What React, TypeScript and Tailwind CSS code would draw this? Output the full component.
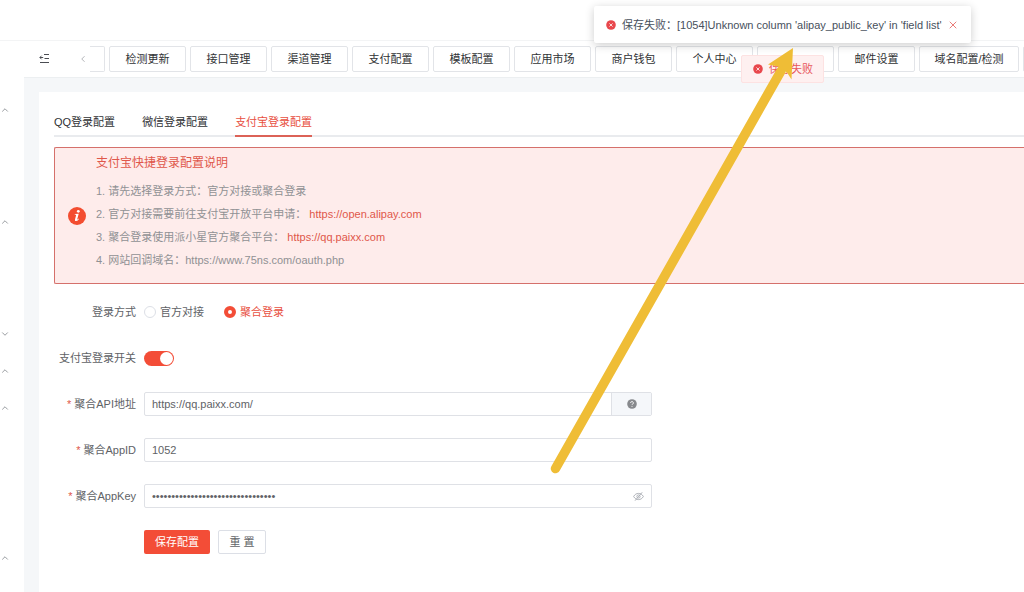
import React, { useState } from 'react';
import { ChevronDown, ChevronLeft, ChevronUp, X } from 'lucide-react';

const menuGroups = [
  { name: '菜单一', open: true, size: 'h-28' },
  { name: '菜单二', open: true, size: 'h-28' },
  { name: '菜单三', open: false, size: 'h-[37px]' },
  { name: '菜单四', open: true, size: 'h-[37px]' },
  { name: '菜单五', open: true, size: 'h-[150px]' },
  { name: '菜单六', open: true, size: 'h-[37px]' },
];

const pageTabs = [
  '检测更新',
  '接口管理',
  '渠道管理',
  '支付配置',
  '模板配置',
  '应用市场',
  '商户钱包',
  '个人中心',
  '',
  '邮件设置',
];

const loginTabs = ['QQ登录配置', '微信登录配置', '支付宝登录配置'];

function ErrorIcon() {
  return (
    <svg className="size-[10px] shrink-0" viewBox="0 0 10 10" aria-hidden="true">
      <circle cx="5" cy="5" r="4.8" fill="#e8474c" />
      <path d="M3.7 3.7l2.6 2.6M6.3 3.7l-2.6 2.6" stroke="#fff" strokeWidth="0.8" strokeLinecap="round" />
    </svg>
  );
}

function FoldIcon() {
  return (
    <svg className="h-[10px] w-[11px]" viewBox="0 0 11 10" fill="none" stroke="#4a4d52" aria-hidden="true">
      <path d="M5 0.5H10M5.5 4.5H10M1 8.5H10M1 3.5h3.200" strokeWidth="1" />
      <path d="M2.6 1.700L0.800 3.500L2.600 5.300" strokeWidth="0.9" />
    </svg>
  );
}

function Row({ label, required, htmlFor, children }: { label?: string; required?: boolean; htmlFor?: string; children: React.ReactNode }) {
  return (
    <div className="flex h-6 items-center gap-2">
      <label htmlFor={htmlFor} className="w-[82px] shrink-0 text-right whitespace-nowrap text-[#606266]">
        {required && <span className="mr-[3px] text-[#e0574a]">*</span>}
        {label}
      </label>
      {children}
    </div>
  );
}

function Radio({ text, checked, onChange }: { text: string; checked: boolean; onChange: () => void }) {
  return (
    <label className={checked ? 'flex items-center gap-1 text-[#e8503f]' : 'flex items-center gap-1 text-[#606266]'}>
      <input
        type="radio"
        name="mode"
        checked={checked}
        onChange={onChange}
        className="size-3 appearance-none rounded-full border border-[#dcdfe6] bg-white checked:border-4 checked:border-[#f34d37]"
      />
      {text}
    </label>
  );
}

export default function App() {
  const [mode, setMode] = useState('union');
  const [enabled, setEnabled] = useState(true);
  return (
    <div className="relative flex h-screen flex-col overflow-hidden bg-white font-['Liberation_Sans','Noto_Sans_CJK_SC',sans-serif] text-[11px] leading-4">
      <header className="h-10 shrink-0" />
      <div className="flex min-h-0 flex-1">
        <nav className="w-6 shrink-0 border-t border-[#f3f4f5] pt-[50px]">
          {menuGroups.map((g) => (
            <div key={g.name} className={g.size}>
              <button aria-label={g.name} className="flex h-[37px] w-full items-center text-[#86898e]">
                {g.open ? <ChevronUp className="size-[10px]" strokeWidth={2} /> : <ChevronDown className="size-[10px]" strokeWidth={2} />}
              </button>
            </div>
          ))}
        </nav>
        <main className="flex min-w-0 flex-1 flex-col bg-[#f5f7f9]">
          <div className="flex h-[38px] shrink-0 items-center border-t border-b border-t-[#f3f4f5] border-b-[#eceff1] bg-white">
            <button aria-label="折叠菜单" className="ml-[15px]">
              <FoldIcon />
            </button>
            <button aria-label="向左" className="ml-7 text-[#a3a6ab]">
              <ChevronLeft className="size-[10px]" strokeWidth={2} />
            </button>
            <div className="ml-[2px] flex min-w-0 flex-1 gap-1 overflow-hidden">
              <button aria-label="首页" className="h-[26px] w-[15px] shrink-0 rounded-r-xs border border-l-0 border-[#e2e4e8]" />
              {pageTabs.map((t) => (
                <button key={t} className="h-[26px] w-[77px] shrink-0 rounded-xs border border-[#e2e4e8] whitespace-nowrap text-[#303235]">
                  {t}
                </button>
              ))}
              <button className="h-[26px] w-[100px] shrink-0 rounded-xs border border-[#e2e4e8] whitespace-nowrap text-[#303235]">
                域名配置/检测
              </button>
              <button aria-label="更多" className="h-[26px] w-[77px] shrink-0 rounded-xs border border-[#e2e4e8]" />
            </div>
          </div>

          <section className="mt-[14px] ml-[15px] flex-1 bg-white pt-[18px] pl-[15px]">
            <div role="tablist" className="flex h-[27px] gap-[27px] border-b-2 border-[#e9ebee]">
              {loginTabs.map((t, i) => (
                <button
                  key={t}
                  role="tab"
                  aria-selected={i === 2}
                  className={
                    i === 2
                      ? 'h-[27px] border-b-2 border-[#dc6257] pb-px whitespace-nowrap text-[#e8503f]'
                      : 'h-[27px] border-b-2 border-transparent pb-px whitespace-nowrap text-[#303235]'
                  }
                >
                  {t}
                </button>
              ))}
            </div>

            <div className="mt-[10px] flex h-[137px] items-center gap-[10px] rounded-l-xs border border-r-0 border-[#d5706b] bg-[#feeceb] pl-[13px]">
              <svg className="size-[18px] shrink-0" viewBox="0 0 18 18" aria-hidden="true">
                <circle cx="9" cy="9" r="9" fill="#f34d30" />
                <circle cx="10.3" cy="4.300" r="1.4" fill="#fff" />
                <path d="M6.700 7.100L10.700 6.700L9.200 12.200Q9.200 12.800 10.700 11.500L11 11.900Q9.300 14.200 7.700 14.100Q6.600 13.900 7 12.400L8.100 8.300Q8.200 7.700 6.700 7.600z" fill="#fff" />
              </svg>
              <div className="pb-[6px]">
                <h2 className="mb-[7px] text-xs leading-5 text-[#e0574a]">支付宝快捷登录配置说明</h2>
                <ol className="leading-[23px] text-[#909194]">
                  <li>1. 请先选择登录方式：官方对接或聚合登录</li>
                  <li>
                    2. 官方对接需要前往支付宝开放平台申请：{' '}
                    <a href="https://open.alipay.com" className="text-[#e0574a]">https://open.alipay.com</a>
                  </li>
                  <li>
                    3. 聚合登录使用派小星官方聚合平台：{' '}
                    <a href="https://qq.paixx.com" className="text-[#e0574a]">https://qq.paixx.com</a>
                  </li>
                  <li>4. 网站回调域名：https://www.75ns.com/oauth.php</li>
                </ol>
              </div>
            </div>

            <form className="mt-4 flex w-[598px] flex-col gap-[22px]" onSubmit={(e) => e.preventDefault()}>
              <Row label="登录方式">
                <div className="flex gap-5">
                  <Radio text="官方对接" checked={mode === 'official'} onChange={() => setMode('official')} />
                  <Radio text="聚合登录" checked={mode === 'union'} onChange={() => setMode('union')} />
                </div>
              </Row>
              <Row label="支付宝登录开关" htmlFor="enabled">
                <input
                  id="enabled"
                  type="checkbox"
                  role="switch"
                  checked={enabled}
                  onChange={() => setEnabled(!enabled)}
                  className="flex h-[15px] w-[30px] appearance-none items-center rounded-full bg-[#dcdfe6] px-px before:size-[13px] before:rounded-full before:bg-white checked:justify-end checked:bg-[#f34d37]"
                />
              </Row>
              <Row label="聚合API地址" required htmlFor="api">
                <div className="flex h-full min-w-0 flex-1 rounded-xs border border-[#dfe1e6]">
                  <input id="api" defaultValue="https://qq.paixx.com/" className="min-w-0 flex-1 px-[7px] text-[#606266] outline-none" />
                  <button type="button" aria-label="帮助" className="flex w-10 items-center justify-center border-l border-[#dfe1e6] bg-[#f5f7fa]">
                    <svg className="size-[10px]" viewBox="0 0 10 10" aria-hidden="true">
                      <circle cx="5" cy="5" r="4.8" fill="#87898d" />
                      <path d="M3.6 3.9a1.4 1.3 0 1 1 2.1 1.1c-.5.3-.7.5-.7 1.1M5 7v.9" fill="none" stroke="#fff" strokeWidth="0.9" />
                    </svg>
                  </button>
                </div>
              </Row>
              <Row label="聚合AppID" required htmlFor="appid">
                <input id="appid" defaultValue="1052" className="h-full min-w-0 flex-1 rounded-xs border border-[#dfe1e6] px-[7px] text-[#606266] outline-none" />
              </Row>
              <Row label="聚合AppKey" required htmlFor="appkey">
                <div className="flex h-full min-w-0 flex-1 items-center rounded-xs border border-[#dfe1e6] pr-[7px]">
                  <input
                    id="appkey"
                    type="password"
                    defaultValue="0123456789abcdef0123456789abcdef"
                    className="min-w-0 flex-1 px-[7px] text-[#606266] outline-none"
                  />
                  <button type="button" aria-label="显示密码">
                    <svg className="h-[9px] w-[11px]" viewBox="0 0 11 9" fill="none" stroke="#a8abb2" strokeWidth="0.9" aria-hidden="true">
                      <path d="M0.6 4.5C2 2.2 3.6 1.4 5.5 1.4s3.500.8 4.900 3.100C9 6.800 7.400 7.600 5.500 7.600S2 6.800 0.600 4.500z" />
                      <circle cx="5.5" cy="4.5" r="1.6" />
                      <path d="M9.200 0.300L2 8.700" />
                    </svg>
                  </button>
                </div>
              </Row>
              <Row>
                <div className="flex gap-2">
                  <button type="submit" className="h-6 w-[66px] rounded-xs bg-[#f34d37] text-white">保存配置</button>
                  <button type="reset" className="h-6 w-12 rounded-xs border border-[#dcdfe6] bg-white text-[#606266]">重 置</button>
                </div>
              </Row>
            </form>
          </section>
        </main>
      </div>

      <div role="status" className="absolute top-[55px] left-[741px] flex h-7 w-[83px] items-center gap-[6px] rounded-xs border border-[#fde2e2] bg-[#fef0f0] pl-[11px] whitespace-nowrap text-[#e8575a]">
        <ErrorIcon />
        保存失败
      </div>
      <div role="alert" className="absolute top-[6px] left-[594px] flex h-[37px] w-[377px] items-center rounded-xs bg-white pr-3 pl-3 shadow-[0_2px_10px_rgba(0,0,0,0.2)]">
        <ErrorIcon />
        <span className="ml-[6px] flex-1 whitespace-nowrap text-[#47505c]">保存失败：[1054]Unknown column 'alipay_public_key' in 'field list'</span>
        <button aria-label="关闭" className="text-[#ea7b78]">
          <X className="size-3" strokeWidth={2} />
        </button>
      </div>
      <svg className="pointer-events-none absolute top-[45px] left-[545px] h-[432px] w-[260px]" viewBox="545 45 260 432" aria-hidden="true">
        <path d="M555.500 468.500L781 71" stroke="#efbd36" strokeWidth="9.5" strokeLinecap="round" />
        <path d="M793 48L768 64.500L778 66.500L787 72.500L791.500 79.500z" fill="#efbd36" />
      </svg>
    </div>
  );
}
